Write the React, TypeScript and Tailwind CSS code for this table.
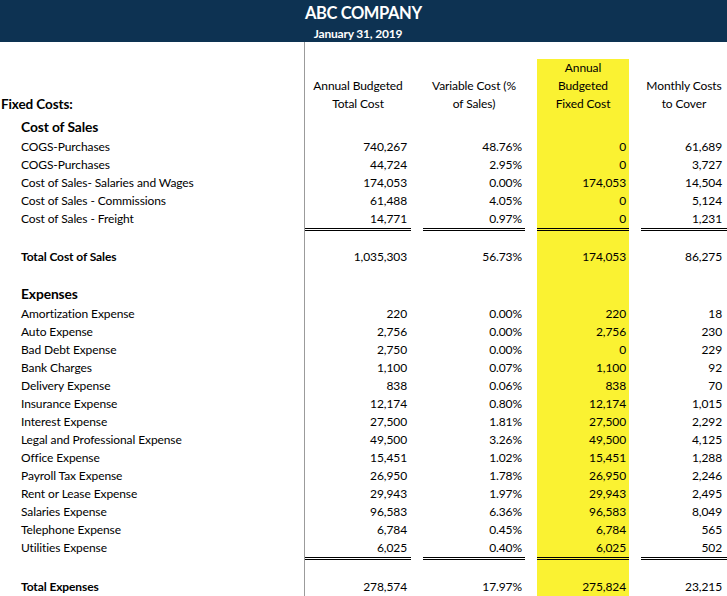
import React from "react";

const GRID = "grid grid-cols-[305px_106px_12px_102px_12px_92px_12px_86px]";

type RowProps = {
  label?: React.ReactNode;
  labelCls?: string;
  v?: string[];
  h?: string;
  dbl?: boolean;
  align?: string;
  yellow?: boolean;
};

function Row({ label, labelCls = "pl-[21px]", v, h = "h-[18px]", dbl = false, align = "items-center", yellow = true }: RowProps) {
  const ul = dbl ? "border-b-[3px] border-double border-black" : "";
  return (
    <div className={`${GRID} ${h}`}>
      <div className={`border-r border-[#9b9b9b] flex ${align} whitespace-nowrap ${labelCls} ${dbl ? "pb-[3px]" : ""}`}>{label}</div>
      <div className={`flex ${align} justify-end pr-[4px] ${ul}`}>{v?.[0]}</div>
      <div />
      <div className={`flex ${align} justify-end pr-[3px] ${ul}`}>{v?.[1]}</div>
      <div />
      <div className={`flex ${align} justify-end pr-[3px] ${yellow ? "bg-[#faf232]" : ""} ${ul}`}>{v?.[2]}</div>
      <div />
      <div className={`flex ${align} justify-end pr-[5px] ${ul}`}>{v?.[3]}</div>
    </div>
  );
}

function HeadRow({ label, cells, h = "h-[18px]", yellow = true }: { label?: React.ReactNode; cells: (string | undefined)[]; h?: string; yellow?: boolean }) {
  return (
    <div className={`${GRID} ${h}`}>
      <div className="border-r border-[#9b9b9b] flex items-center whitespace-nowrap">{label}</div>
      <div className="flex items-center justify-center whitespace-nowrap">{cells[0]}</div>
      <div />
      <div className="flex items-center justify-center whitespace-nowrap">{cells[1]}</div>
      <div />
      <div className={`flex items-center justify-center whitespace-nowrap ${yellow ? "bg-[#faf232]" : ""}`}>{cells[2]}</div>
      <div />
      <div className="flex items-center justify-center whitespace-nowrap">{cells[3]}</div>
    </div>
  );
}

const costOfSales: [string, string[]][] = [
  ["COGS-Purchases", ["740,267", "48.76%", "0", "61,689"]],
  ["COGS-Purchases", ["44,724", "2.95%", "0", "3,727"]],
  ["Cost of Sales- Salaries and Wages", ["174,053", "0.00%", "174,053", "14,504"]],
  ["Cost of Sales - Commissions", ["61,488", "4.05%", "0", "5,124"]],
  ["Cost of Sales - Freight", ["14,771", "0.97%", "0", "1,231"]],
];

const expenses: [string, string[]][] = [
  ["Amortization Expense", ["220", "0.00%", "220", "18"]],
  ["Auto Expense", ["2,756", "0.00%", "2,756", "230"]],
  ["Bad Debt Expense", ["2,750", "0.00%", "0", "229"]],
  ["Bank Charges", ["1,100", "0.07%", "1,100", "92"]],
  ["Delivery Expense", ["838", "0.06%", "838", "70"]],
  ["Insurance Expense", ["12,174", "0.80%", "12,174", "1,015"]],
  ["Interest Expense", ["27,500", "1.81%", "27,500", "2,292"]],
  ["Legal and Professional Expense", ["49,500", "3.26%", "49,500", "4,125"]],
  ["Office Expense", ["15,451", "1.02%", "15,451", "1,288"]],
  ["Payroll Tax Expense", ["26,950", "1.78%", "26,950", "2,246"]],
  ["Rent or Lease Expense", ["29,943", "1.97%", "29,943", "2,495"]],
  ["Salaries Expense", ["96,583", "6.36%", "96,583", "8,049"]],
  ["Telephone Expense", ["6,784", "0.45%", "6,784", "565"]],
  ["Utilities Expense", ["6,025", "0.40%", "6,025", "502"]],
];

export default function App() {
  return (
    <div className="w-[727px] h-[596px] overflow-hidden bg-white text-black font-['Lato','Noto_Sans',sans-serif] text-[12px] tracking-[-0.1px] leading-[18px]">
      {/* title band */}
      <div className={`${GRID} h-[42px] bg-[#0d3252] text-white`}>
        <div />
        <div className="flex flex-col whitespace-nowrap">
          <div className="mt-[2px] text-[16.5px] leading-[22px] font-bold tracking-[-0.4px]">ABC COMPANY</div>
          <div className="mt-[3px] text-[12px] leading-[14px] font-bold text-center tracking-[-0.2px]">January 31, 2019</div>
        </div>
      </div>

      <HeadRow cells={[]} h="h-[17px]" yellow={false} />
      <HeadRow cells={[undefined, undefined, "Annual", undefined]} />
      <HeadRow cells={["Annual Budgeted", "Variable Cost (%", "Budgeted", "Monthly Costs"]} />
      <HeadRow
        label={<span className="font-bold text-[13.5px] pl-[1px]">Fixed Costs:</span>}
        cells={["Total Cost", "of Sales)", "Fixed Cost", "to Cover"]}
      />

      <Row
        h="h-[25px]"
        align="items-end"
        label={<span className="font-bold text-[13.8px] pb-[2px]">Cost of Sales</span>}
      />
      {costOfSales.map(([l, v], i) => (
        <Row key={l + i} label={l} v={v} dbl={i === costOfSales.length - 1} h={i === costOfSales.length - 1 ? "h-[21px]" : "h-[18px]"} />
      ))}
      <Row h="h-[17px]" />
      <Row label={<span className="font-bold">Total Cost of Sales</span>} v={["1,035,303", "56.73%", "174,053", "86,275"]} />
      <Row h="h-[18px]" />
      <Row
        h="h-[21px]"
        align="items-end"
        label={<span className="font-bold text-[13.8px] pb-[2px]">Expenses</span>}
      />
      {expenses.map(([l, v], i) => (
        <Row key={l + i} label={l} v={v} dbl={i === expenses.length - 1} h={i === expenses.length - 1 ? "h-[21px]" : "h-[18px]"} />
      ))}
      <Row h="h-[18px]" />
      <Row label={<span className="font-bold">Total Expenses</span>} v={["278,574", "17.97%", "275,824", "23,215"]} />
    </div>
  );
}
